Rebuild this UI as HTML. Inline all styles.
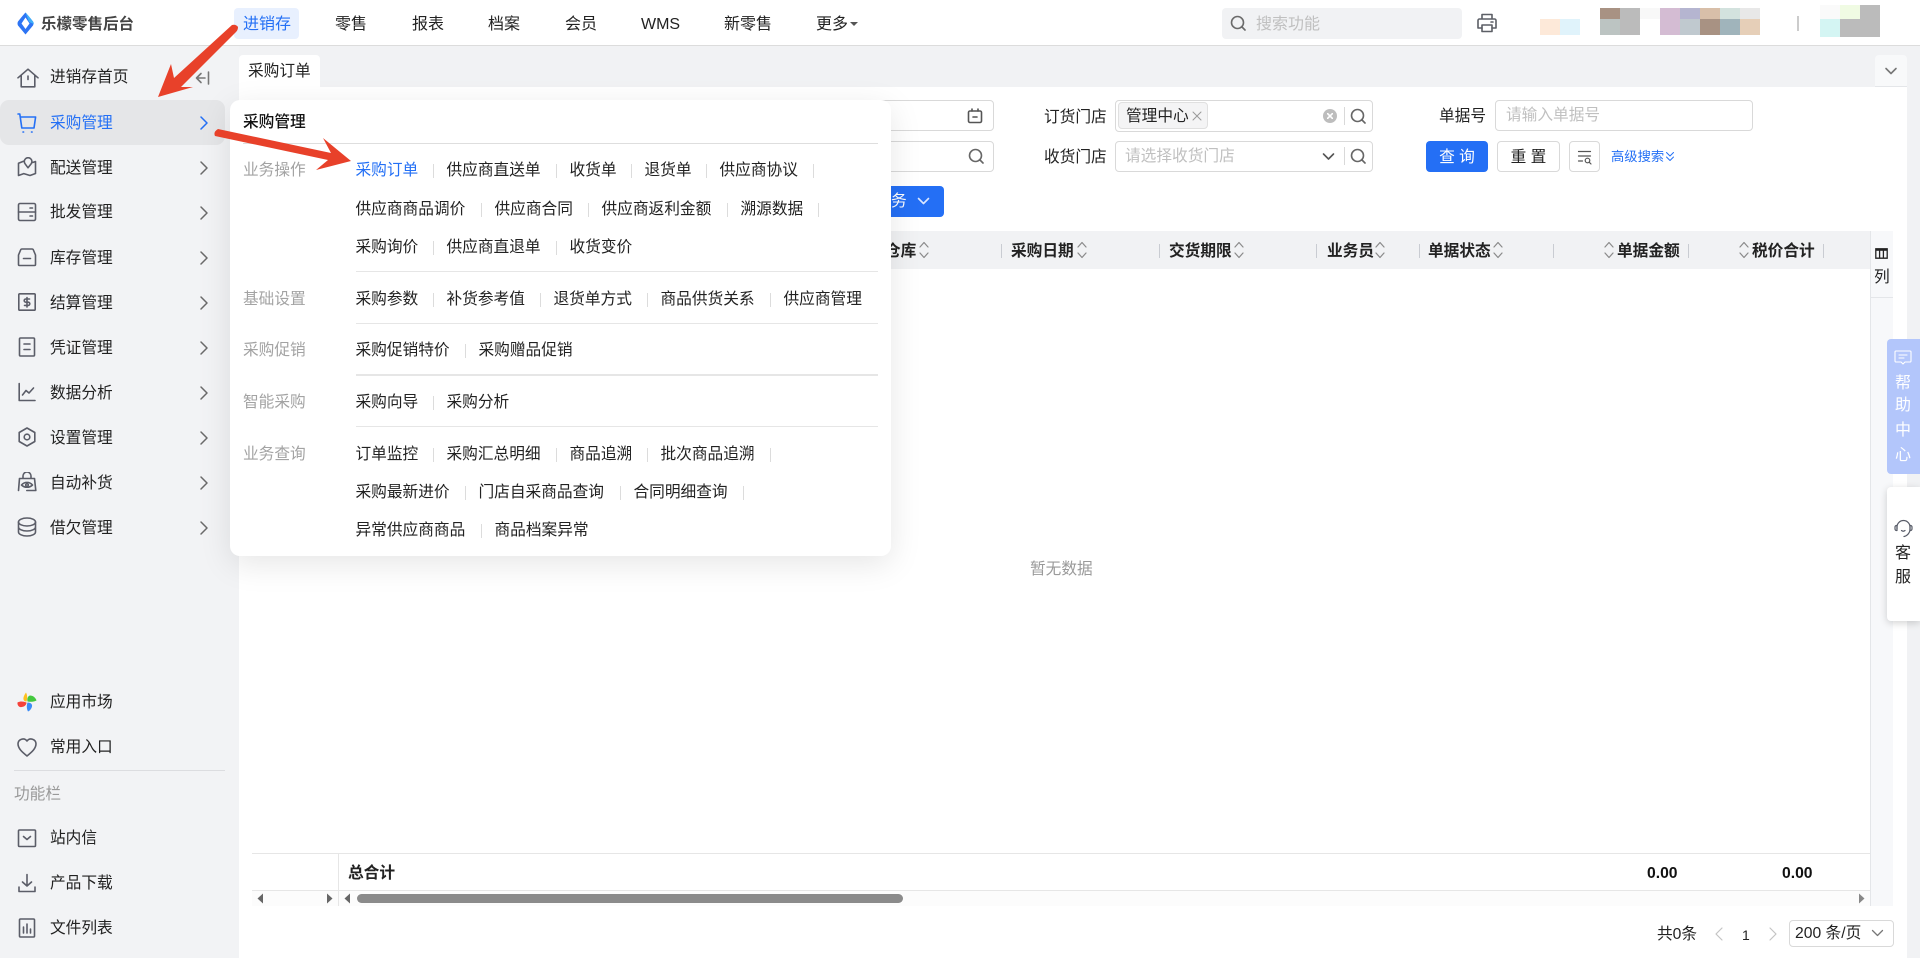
<!DOCTYPE html>
<html lang="zh-CN"><head><meta charset="utf-8"><title>采购订单</title>
<style>
html,body{margin:0;padding:0;width:1920px;height:958px;overflow:hidden;background:#fff}
body{font-family:"Liberation Sans","Noto Sans CJK SC",sans-serif;font-size:15.7px;color:#222;position:relative}
.a,.t,svg.i,.l,.it,.sep{position:absolute}
.t{white-space:nowrap;line-height:20px;height:20px;transform:translateY(2px)}
.n{font-size:16px}
.b{font-weight:700}
.g{color:#a3a3a3}.p{color:#c0c0c0}
.i{fill:none;stroke:#5b5d68;stroke-width:1.6;stroke-linecap:round;stroke-linejoin:round}
.it{white-space:nowrap;line-height:20px;display:flex;align-items:center;left:355.5px;transform:translateY(2px)}
.it i{display:block;width:1px;height:14px;background:#dcdcdc;margin:0 13px}
.it span{display:block}
.line{position:absolute;left:356px;width:522px;height:1px;background:#e6e6e6}
.box{position:absolute;border:1px solid #d9d9d9;border-radius:4px;box-sizing:border-box;background:#fff}
.ts{position:absolute;width:1px;height:14px;top:244px;background:#c9ccd2}
.chev{stroke:#6a6a6a;stroke-width:1.5}
</style></head><body>

<!-- main backgrounds -->
<div class="a" style="left:0;top:46px;width:239px;height:912px;background:#f2f3f5"></div>
<div class="a" style="left:239px;top:46px;width:1681px;height:41px;background:#f1f2f4"></div>
<div class="a" style="left:1907px;top:46px;width:13px;height:912px;background:#f1f2f4"></div>
<div class="a" style="left:239px;top:55px;width:81px;height:32px;background:#fff;border-radius:4px 4px 0 0"></div>
<div class="t" style="left:248px;top:60px">采购订单</div>
<div class="a" style="left:1875px;top:55px;width:32px;height:31px;background:#f8f9fa;border-bottom:1px solid #e4e6e9;border-radius:4px 4px 0 0"></div>
<svg class="i" style="left:1884px;top:64px;stroke:#777" width="14" height="14" viewBox="0 0 14 14"><path d="M2 4.500l5 5 5-5"/></svg>

<!-- header -->
<div class="a" style="left:0;top:0;width:1920px;height:45px;background:#fff;border-bottom:1px solid #dcdcdc"></div>
<svg class="a" style="left:17px;top:12px" width="17" height="23" viewBox="0 0 17 23"><path d="M8.500 .5Q10 2 16 9.500q1 2 0 4L8.500 22.500 1 13.500q-1-2 0-4Q7 2 8.500 .5z" fill="#2d74f4"/><path d="M8.500 .5Q10 2 16 9.500q1 1 .8 2.500L12 10z" fill="#3fb0f8"/><path d="M8.500 5.500L12.500 11.500 8.500 17 4.500 11.500z" fill="#fff"/></svg>
<div class="t b" style="left:41px;top:13px;font-size:15.500px;color:#444">乐檬零售后台</div>
<div class="a" style="left:234px;top:8px;width:65px;height:31px;background:#e8f0fe;border-radius:4px"></div>
<div class="t n" style="left:243px;top:13px;color:#2470f5">进销存</div>
<div class="t n" style="left:335px;top:13px">零售</div>
<div class="t n" style="left:412px;top:13px">报表</div>
<div class="t n" style="left:488px;top:13px">档案</div>
<div class="t n" style="left:565px;top:13px">会员</div>
<div class="t n" style="left:641px;top:13px">WMS</div>
<div class="t n" style="left:724px;top:13px">新零售</div>
<div class="t n" style="left:816px;top:13px">更多</div>
<div class="a" style="left:850px;top:22px;width:0;height:0;border:4px solid transparent;border-top:4px solid #555;border-bottom:0"></div>
<div class="a" style="left:1222px;top:8px;width:240px;height:31px;background:#f1f2f4;border-radius:4px"></div>
<svg class="i" style="left:1230px;top:15px;stroke:#6a6a6a" width="16" height="16" viewBox="0 0 16 16"><circle cx="7.500" cy="7.500" r="6"/><path d="M12 12l3 3"/></svg>
<div class="t p n" style="left:1256px;top:13px">搜索功能</div>
<svg class="i" style="left:1477px;top:13px;stroke:#5c5f66" width="20" height="20" viewBox="0 0 20 20"><path d="M5 6V1.500h10V6M5 15H1V7.500A1.500 1.500 0 0 1 2.500 6h15A1.500 1.500 0 0 1 19 7.500V15h-4"/><path d="M5 12h10v6.500H5zM14 9h2"/></svg>
<!-- mosaic blocks -->
<div class="a" style="left:1540px;top:19px;width:20px;height:16px;background:#fde9d9"></div>
<div class="a" style="left:1560px;top:19px;width:20px;height:16px;background:#e0f3fb"></div>
<div class="a" style="left:1600px;top:8px;width:20px;height:11px;background:#a89283"></div>
<div class="a" style="left:1600px;top:19px;width:20px;height:16px;background:#bcc4c2"></div>
<div class="a" style="left:1620px;top:8px;width:20px;height:27px;background:#bbb"></div>
<div class="a" style="left:1640px;top:8px;width:20px;height:11px;background:#f8f8f8"></div>
<div class="a" style="left:1660px;top:8px;width:20px;height:27px;background:#d4bcd3"></div>
<div class="a" style="left:1680px;top:8px;width:20px;height:11px;background:#b5b5d0"></div>
<div class="a" style="left:1680px;top:19px;width:20px;height:16px;background:#c0c9cf"></div>
<div class="a" style="left:1700px;top:8px;width:20px;height:11px;background:#d8bfa9"></div>
<div class="a" style="left:1700px;top:19px;width:20px;height:16px;background:#a89283"></div>
<div class="a" style="left:1720px;top:8px;width:20px;height:11px;background:#d3e2de"></div>
<div class="a" style="left:1720px;top:19px;width:20px;height:16px;background:#a0b4bb"></div>
<div class="a" style="left:1740px;top:8px;width:20px;height:11px;background:#e8e8e8"></div>
<div class="a" style="left:1740px;top:19px;width:20px;height:16px;background:#e6cfb8"></div>
<div class="a" style="left:1797px;top:16px;width:2px;height:15px;background:#ccc"></div>
<div class="a" style="left:1820px;top:5px;width:20px;height:14px;background:#fafafa"></div>
<div class="a" style="left:1820px;top:19px;width:20px;height:18px;background:#d4f5f3"></div>
<div class="a" style="left:1840px;top:5px;width:20px;height:14px;background:#f0fbe3"></div>
<div class="a" style="left:1840px;top:19px;width:20px;height:18px;background:#bbb"></div>
<div class="a" style="left:1860px;top:5px;width:20px;height:32px;background:#bbb"></div>

<!-- sidebar -->
<div class="a" style="left:0;top:100px;width:225px;height:45px;background:#e5e6e8;border-radius:9px"></div>
<svg class="i" style="left:17px;top:68px" width="22" height="20" viewBox="0 0 22 20"><path d="M1 9.800L11 1.200l10 8.600M4.200 7.500V18.800H17.800V7.500M11 8v3.500"/></svg>
<div class="t" style="left:50px;top:66px">进销存首页</div>
<svg class="i" style="left:195px;top:71px;stroke:#777" width="16" height="14" viewBox="0 0 16 14"><path d="M13.500 1v12M10 7H1.500M6 2.500L1.500 7 6 11.500"/></svg>

<svg class="i" style="left:17px;top:113px;stroke:#2470f5" width="20" height="20" viewBox="0 0 20 20"><path d="M1 1h1.800L4.800 15H17l1.600-11H3.300"/><path d="M6 19h.6M14.500 19h.6"/></svg>
<div class="t" style="left:50px;top:112px;color:#2470f5">采购管理</div>

<svg class="i" style="left:17px;top:157px" width="20" height="20" viewBox="0 0 20 20"><path d="M6.500 4.200L1.500 6.300v12.200l5.300-1.900 6.200 1.900 5.500-2V4.500L15.700 5.500"/><path d="M11 10.800L8 6.700a3.800 3.800 0 1 1 6.200 0z"/></svg>
<div class="t" style="left:50px;top:157px">配送管理</div>

<svg class="i" style="left:17px;top:202px" width="20" height="20" viewBox="0 0 20 20"><rect x="1.500" y="1.500" width="17" height="17" rx="1.500"/><path d="M1.500 10h17M13 6h2.500M13 14h2.500"/></svg>
<div class="t" style="left:50px;top:201px">批发管理</div>

<svg class="i" style="left:17px;top:247px" width="20" height="20" viewBox="0 0 20 20"><path d="M5 2h10a1.500 1.500 0 0 1 1.400 1L18.500 8v9.500a1 1 0 0 1-1 1h-15a1 1 0 0 1-1-1V8L3.600 3A1.500 1.500 0 0 1 5 2z"/><path d="M6.500 11.500h7"/></svg>
<div class="t" style="left:50px;top:247px">库存管理</div>

<svg class="i" style="left:17px;top:292px" width="20" height="20" viewBox="0 0 20 20"><rect x="1.800" y="1.800" width="16.400" height="16.400" rx="1"/><path d="M12.500 7H8.800a1.500 1.500 0 0 0 0 3.200h2.400a1.500 1.500 0 0 1 0 3.200H7.500M10 5.500v9.500"/></svg>
<div class="t" style="left:50px;top:292px">结算管理</div>

<svg class="i" style="left:17px;top:337px" width="20" height="20" viewBox="0 0 20 20"><rect x="2.500" y="1" width="15" height="18" rx="1"/><path d="M7 7h6M7 12.500h6"/></svg>
<div class="t" style="left:50px;top:337px">凭证管理</div>

<svg class="i" style="left:17px;top:382px" width="20" height="20" viewBox="0 0 20 20"><path d="M2.200 1.500V18.500H18M5.500 13l3.500-4.500 3 2.500 4.500-5"/></svg>
<div class="t" style="left:50px;top:382px">数据分析</div>

<svg class="i" style="left:17px;top:427px" width="20" height="20" viewBox="0 0 20 20"><path d="M10 1l7.800 4.500v9L10 19l-7.800-4.500v-9z"/><circle cx="10" cy="10" r="2.800"/></svg>
<div class="t" style="left:50px;top:427px">设置管理</div>

<svg class="i" style="left:17px;top:472px" width="20" height="20" viewBox="0 0 20 20"><path d="M6 6.500V4a4 4 0 0 1 8 0v2.500M2.500 6.500h15l1.300 12h-9M2.500 6.500L1.500 18.500M4.500 13c3-3.500 8-3.500 11 0-3 3-8 3-11 0z"/><circle cx="10" cy="13" r="1.300"/></svg>
<div class="t" style="left:50px;top:472px">自动补货</div>

<svg class="i" style="left:17px;top:517px" width="20" height="20" viewBox="0 0 20 20"><ellipse cx="10" cy="5" rx="8.500" ry="4"/><path d="M1.500 5v10c0 2.200 3.800 4 8.500 4s8.500-1.800 8.500-4V5M1.500 10c0 2.200 3.800 4 8.500 4s8.500-1.800 8.500-4"/></svg>
<div class="t" style="left:50px;top:517px">借欠管理</div>

<!-- chevrons -->
<svg class="i chev" style="left:199px;top:114px;stroke:#2470f5" width="10" height="18" viewBox="0 0 10 18"><path d="M2 3l6 6-6 6"/></svg>
<svg class="i chev" style="left:199px;top:159px" width="10" height="18" viewBox="0 0 10 18"><path d="M2 3l6 6-6 6"/></svg>
<svg class="i chev" style="left:199px;top:204px" width="10" height="18" viewBox="0 0 10 18"><path d="M2 3l6 6-6 6"/></svg>
<svg class="i chev" style="left:199px;top:249px" width="10" height="18" viewBox="0 0 10 18"><path d="M2 3l6 6-6 6"/></svg>
<svg class="i chev" style="left:199px;top:294px" width="10" height="18" viewBox="0 0 10 18"><path d="M2 3l6 6-6 6"/></svg>
<svg class="i chev" style="left:199px;top:339px" width="10" height="18" viewBox="0 0 10 18"><path d="M2 3l6 6-6 6"/></svg>
<svg class="i chev" style="left:199px;top:384px" width="10" height="18" viewBox="0 0 10 18"><path d="M2 3l6 6-6 6"/></svg>
<svg class="i chev" style="left:199px;top:429px" width="10" height="18" viewBox="0 0 10 18"><path d="M2 3l6 6-6 6"/></svg>
<svg class="i chev" style="left:199px;top:474px" width="10" height="18" viewBox="0 0 10 18"><path d="M2 3l6 6-6 6"/></svg>
<svg class="i chev" style="left:199px;top:519px" width="10" height="18" viewBox="0 0 10 18"><path d="M2 3l6 6-6 6"/></svg>

<!-- sidebar bottom -->
<svg class="a" style="left:17px;top:692px" width="20" height="20" viewBox="0 0 20 20"><path d="M9.500 9.500C6 9.500 5 6 9 .5c1.500 3 1.500 6 .5 9z" fill="#fdc01e"/><path d="M10.500 9.500c-1-4 1.500-6 2.500-6 3 0 5.500 2 6.500 5-3 1.500-6 1.500-9 1z" fill="#44c83f"/><path d="M9.500 10.500c0 3.500-4 5-6.500 4.500-2-.5-2.800-3-2.500-4.500 3-1.500 6-1 9 0z" fill="#f5423b"/><path d="M10.500 10.500c3.500 0 5 2 4.500 4-.5 2.500-2.500 4.500-4 5-1.500-3-1.500-6-.5-9z" fill="#3b8cf7"/></svg>
<div class="t" style="left:50px;top:691px">应用市场</div>
<svg class="i" style="left:17px;top:737px" width="20" height="20" viewBox="0 0 20 20"><path d="M10 19C5 15 1 11.500 1 6.800A5 5 0 0 1 10 4a5 5 0 0 1 9 2.800c0 4.700-4 8.200-9 12.200z"/></svg>
<div class="t" style="left:50px;top:736px">常用入口</div>
<div class="a" style="left:14px;top:770px;width:211px;height:1px;background:#dcdde0"></div>
<div class="t g" style="left:14px;top:783px;color:#999">功能栏</div>
<svg class="i" style="left:17px;top:828px" width="20" height="20" viewBox="0 0 20 20"><rect x="1.500" y="2" width="17" height="16.500" rx="1"/><path d="M6.500 8.500L10 11.500l3.500-3"/></svg>
<div class="t" style="left:50px;top:827px">站内信</div>
<svg class="i" style="left:17px;top:873px" width="20" height="20" viewBox="0 0 20 20"><path d="M10 1.500v11.500M5.500 9l4.500 4 4.500-4M2 14v4.500h16V14"/></svg>
<div class="t" style="left:50px;top:872px">产品下载</div>
<svg class="i" style="left:17px;top:918px" width="20" height="20" viewBox="0 0 20 20"><rect x="2.500" y="1" width="15" height="18" rx="1"/><path d="M6.500 9v6M10 6v9M13.500 11v4"/></svg>
<div class="t" style="left:50px;top:917px">文件列表</div>

<!-- form -->
<div class="box" style="left:850px;top:100px;width:144px;height:31px"></div>
<svg class="i" style="left:967px;top:108px;stroke:#555" width="16" height="16" viewBox="0 0 16 16"><rect x="1.500" y="3" width="13" height="11.500" rx="1.500"/><path d="M5 1v2M11 1v2M6 9h4"/></svg>
<div class="box" style="left:850px;top:141px;width:144px;height:31px"></div>
<svg class="i" style="left:968px;top:148px;stroke:#666" width="16" height="16" viewBox="0 0 16 16"><circle cx="7.500" cy="7.500" r="6"/><path d="M12 12l3 3"/></svg>
<div class="t" style="left:1044px;top:106px">订货门店</div>
<div class="t" style="left:1044px;top:146px">收货门店</div>
<div class="box" style="left:1115px;top:100px;width:258px;height:32px"></div>
<div class="box" style="left:1118px;top:102px;width:90px;height:27px;background:#f4f4f5;border-color:#e0e0e0"></div>
<div class="t" style="left:1126px;top:105px">管理中心</div>
<svg class="i" style="left:1192px;top:111px;stroke:#999;stroke-width:1" width="10" height="10" viewBox="0 0 10 10"><path d="M1 1l8 8M9 1L1 9"/></svg>
<div class="a" style="left:1323px;top:109px;width:14px;height:14px;border-radius:50%;background:#bdbdbd"></div>
<svg class="i" style="left:1327px;top:113px;stroke:#fff" width="6" height="6" viewBox="0 0 6 6"><path d="M.5.500l5 5M5.500.500l-5 5"/></svg>
<div class="a" style="left:1344px;top:107px;width:1px;height:18px;background:#d9d9d9"></div>
<svg class="i" style="left:1350px;top:108px;stroke:#666" width="16" height="16" viewBox="0 0 16 16"><circle cx="7.500" cy="7.500" r="6"/><path d="M12 12l3 3"/></svg>
<div class="box" style="left:1115px;top:141px;width:258px;height:31px"></div>
<div class="t p" style="left:1125px;top:145px">请选择收货门店</div>
<svg class="i" style="left:1322px;top:150px;stroke:#555" width="13" height="13" viewBox="0 0 13 13"><path d="M1.500 4l5 5 5-5"/></svg>
<div class="a" style="left:1344px;top:147px;width:1px;height:18px;background:#d9d9d9"></div>
<svg class="i" style="left:1350px;top:148px;stroke:#666" width="16" height="16" viewBox="0 0 16 16"><circle cx="7.500" cy="7.500" r="6"/><path d="M12 12l3 3"/></svg>
<div class="t" style="left:1439px;top:105px">单据号</div>
<div class="box" style="left:1495px;top:100px;width:258px;height:31px"></div>
<div class="t p" style="left:1506px;top:104px">请输入单据号</div>
<div class="a" style="left:1426px;top:141px;width:62px;height:31px;background:#246ff5;border-radius:4px"></div>
<div class="t" style="left:1426px;top:146px;width:62px;text-align:center;color:#fff">查 询</div>
<div class="box" style="left:1497px;top:141px;width:63px;height:31px"></div>
<div class="t" style="left:1497px;top:146px;width:63px;text-align:center">重 置</div>
<div class="box" style="left:1569px;top:141px;width:31px;height:31px"></div>
<svg class="i" style="left:1577px;top:149px;stroke:#555;stroke-width:1.200" width="16" height="16" viewBox="0 0 16 16"><path d="M1.500 2.500h12M1.500 7h12M1.500 12h4"/><circle cx="10.500" cy="11.500" r="2.300"/><path d="M12.200 13.200l1.800 1.800"/></svg>
<div class="t" style="left:1611px;top:145px;font-size:13.300px;color:#2470f5">高级搜索</div>
<svg class="i" style="left:1665px;top:151px;stroke:#2470f5;stroke-width:1" width="10" height="11" viewBox="0 0 10 11"><path d="M1.500 1.500L5 5l3.500-3.500M1.500 6L5 9.500 8.500 6"/></svg>

<!-- blue button -->
<div class="a" style="left:860px;top:186px;width:84px;height:31px;background:#246ff5;border-radius:4px"></div>
<div class="t" style="left:891px;top:190px;color:#fff">务</div>
<svg class="i" style="left:917px;top:196px;stroke:#dbe7ff" width="13" height="11" viewBox="0 0 13 11"><path d="M1.500 2.500l5 5 5-5"/></svg>

<!-- table header -->
<div class="a" style="left:252px;top:231px;width:1619px;height:38px;background:#f1f2f4"></div>
<div class="ts" style="left:1001px"></div><div class="ts" style="left:1159px"></div><div class="ts" style="left:1316px"></div><div class="ts" style="left:1419px"></div><div class="ts" style="left:1553px"></div><div class="ts" style="left:1688px"></div><div class="ts" style="left:1823px"></div>
<div class="t b" style="left:885px;top:240px">仓库</div>
<div class="t b" style="left:1011px;top:240px">采购日期</div>
<div class="t b" style="left:1169px;top:240px">交货期限</div>
<div class="t b" style="left:1327px;top:240px">业务员</div>
<div class="t b" style="left:1428px;top:240px">单据状态</div>
<div class="t b" style="left:1617px;top:240px">单据金额</div>
<div class="t b" style="left:1752px;top:240px">税价合计</div>
<svg class="i" style="left:919px;top:241px;stroke:#8a8a8a;stroke-width:1.200" width="10" height="18" viewBox="0 0 10 18"><path d="M1 6l4-4.500L9 6M1 12l4 4.500L9 12"/></svg>
<svg class="i" style="left:1077px;top:241px;stroke:#8a8a8a;stroke-width:1.200" width="10" height="18" viewBox="0 0 10 18"><path d="M1 6l4-4.500L9 6M1 12l4 4.500L9 12"/></svg>
<svg class="i" style="left:1234px;top:241px;stroke:#8a8a8a;stroke-width:1.200" width="10" height="18" viewBox="0 0 10 18"><path d="M1 6l4-4.500L9 6M1 12l4 4.500L9 12"/></svg>
<svg class="i" style="left:1375px;top:241px;stroke:#8a8a8a;stroke-width:1.200" width="10" height="18" viewBox="0 0 10 18"><path d="M1 6l4-4.500L9 6M1 12l4 4.500L9 12"/></svg>
<svg class="i" style="left:1493px;top:241px;stroke:#8a8a8a;stroke-width:1.200" width="10" height="18" viewBox="0 0 10 18"><path d="M1 6l4-4.500L9 6M1 12l4 4.500L9 12"/></svg>
<svg class="i" style="left:1604px;top:241px;stroke:#8a8a8a;stroke-width:1.200" width="10" height="18" viewBox="0 0 10 18"><path d="M1 6l4-4.500L9 6M1 12l4 4.500L9 12"/></svg>
<svg class="i" style="left:1739px;top:241px;stroke:#8a8a8a;stroke-width:1.200" width="10" height="18" viewBox="0 0 10 18"><path d="M1 6l4-4.500L9 6M1 12l4 4.500L9 12"/></svg>

<!-- right column strip -->
<div class="a" style="left:1870px;top:231px;width:23px;height:675px;background:#f7f8fa;border-left:1px solid #e4e6e9;box-sizing:border-box"></div>
<div class="a" style="left:1871px;top:297px;width:22px;height:1px;background:#e4e6e9"></div>
<svg class="a" style="left:1875px;top:248px" width="13" height="11" viewBox="0 0 13 11"><path d="M.8.800h11.400v9.400H.8zM4.600.800v9.400M8.400.800v9.400" fill="none" stroke="#222" stroke-width="1.300"/><path d="M.8.800h11.400v2H.8z" fill="#222"/></svg>
<div class="t" style="left:1874px;top:266px">列</div>

<div class="t" style="left:1030px;top:558px;color:#9a9a9a">暂无数据</div>

<!-- summary -->
<div class="a" style="left:252px;top:853px;width:1618px;height:1px;background:#e6e6e6"></div>
<div class="a" style="left:252px;top:890px;width:1618px;height:1px;background:#e6e6e6"></div>
<div class="a" style="left:338px;top:853px;width:1px;height:53px;background:#e6e6e6"></div>
<div class="a" style="left:252px;top:891px;width:1618px;height:15px;background:#fcfcfc"></div>
<div class="t b" style="left:348px;top:862px">总合计</div>
<div class="t b" style="left:1647px;top:862px;color:#111">0.00</div>
<div class="t b" style="left:1782px;top:862px;color:#111">0.00</div>
<div class="a" style="left:338px;top:891px;width:1px;height:15px;background:#e6e6e6"></div>
<div class="a" style="left:357px;top:894px;width:546px;height:9px;background:#8b8b8b;border-radius:5px"></div>
<svg class="a" style="left:256px;top:893px" width="8" height="11" viewBox="0 0 8 11"><path d="M7 .5L1.500 5.500 7 10.500z" fill="#666"/></svg>
<svg class="a" style="left:326px;top:893px" width="8" height="11" viewBox="0 0 8 11"><path d="M1 .5L6.500 5.500 1 10.500z" fill="#666"/></svg>
<svg class="a" style="left:343px;top:893px" width="8" height="11" viewBox="0 0 8 11"><path d="M7 .5L1.500 5.500 7 10.500z" fill="#666"/></svg>
<svg class="a" style="left:1858px;top:893px" width="8" height="11" viewBox="0 0 8 11"><path d="M1 .5L6.500 5.500 1 10.500z" fill="#888"/></svg>

<!-- pagination -->
<div class="t" style="left:1657px;top:923px">共0条</div>
<svg class="i" style="left:1714px;top:927px;stroke:#c4c4c4;stroke-width:1.200" width="10" height="14" viewBox="0 0 10 14"><path d="M8 1L2 7l6 6"/></svg>
<div class="t" style="left:1742px;top:923px;font-size:14px">1</div>
<svg class="i" style="left:1768px;top:927px;stroke:#c4c4c4;stroke-width:1.200" width="10" height="14" viewBox="0 0 10 14"><path d="M2 1l6 6-6 6"/></svg>
<div class="box" style="left:1789px;top:920px;width:105px;height:27px"></div>
<div class="t" style="left:1795px;top:922px">200 条/页</div>
<svg class="i" style="left:1871px;top:928px;stroke:#777;stroke-width:1.300" width="13" height="11" viewBox="0 0 13 11"><path d="M1.500 2.500l5 5 5-5"/></svg>

<!-- side floating -->
<div class="a" style="left:1887px;top:339px;width:33px;height:135px;background:#b3c6fb;border-radius:4px 0 0 4px"></div>
<svg class="i" style="left:1894px;top:350px;stroke:#fff;stroke-width:1.100" width="18" height="15" viewBox="0 0 18 15"><path d="M2 1h14a1 1 0 0 1 1 1v9a1 1 0 0 1-1 1h-5l-2 2-2-2H2a1 1 0 0 1-1-1V2a1 1 0 0 1 1-1zM5 5h8M5 8h5"/></svg>
<div class="t n" style="left:1895px;top:372px;color:#fff">帮</div>
<div class="t n" style="left:1895px;top:394px;color:#fff">助</div>
<div class="t n" style="left:1895px;top:419px;color:#fff">中</div>
<div class="t n" style="left:1895px;top:444px;color:#fff">心</div>
<div class="a" style="left:1887px;top:487px;width:33px;height:134px;background:#fff;border-radius:4px 0 0 4px;box-shadow:0 2px 8px rgba(0,0,0,.18)"></div>
<svg class="i" style="left:1894px;top:519px;stroke:#585c68;stroke-width:1.200" width="19" height="19" viewBox="0 0 19 19"><path d="M3 10V8a6.500 6.500 0 0 1 13 0v2c0 4-3 7-6 7.500"/><path d="M3 6.500h-.5A1.500 1.500 0 0 0 1 8v2a1.500 1.500 0 0 0 1.500 1.500H3zM16 6.500h.5A1.500 1.500 0 0 1 18 8v2a1.500 1.500 0 0 1-1.500 1.500H16zM7.500 11.500c1 .8 2.500.8 3.500 0"/></svg>
<div class="t n" style="left:1895px;top:542px">客</div>
<div class="t n" style="left:1895px;top:566px">服</div>

<!-- popup -->
<div class="a" style="left:230px;top:100px;width:661px;height:456px;background:#fff;border-radius:10px;box-shadow:0 8px 32px rgba(0,0,0,.1)"></div>
<div class="t" style="left:243px;top:111px;color:#111;font-weight:500">采购管理</div>
<div class="a" style="left:243px;top:143px;width:635px;height:1px;background:#dedede"></div>

<div class="t g" style="left:243px;top:159px">业务操作</div>
<div class="it" style="top:159px"><span style="color:#2470f5;width:64px">采购订单</span><i></i><span style="width:96px">供应商直送单</span><i></i><span style="width:48px">收货单</span><i></i><span style="width:48px">退货单</span><i></i><span style="width:80px">供应商协议</span><i></i></div>
<div class="it" style="top:198px"><span style="width:112px">供应商商品调价</span><i></i><span style="width:80px">供应商合同</span><i></i><span style="width:112px">供应商返利金额</span><i></i><span style="width:64px">溯源数据</span><i></i></div>
<div class="it" style="top:236px"><span style="width:64px">采购询价</span><i></i><span style="width:96px">供应商直退单</span><i></i><span style="width:64px">收货变价</span></div>
<div class="line" style="top:271px"></div>

<div class="t g" style="left:243px;top:288px">基础设置</div>
<div class="it" style="top:288px"><span style="width:64px">采购参数</span><i></i><span style="width:80px">补货参考值</span><i></i><span style="width:80px">退货单方式</span><i></i><span style="width:96px">商品供货关系</span><i></i><span style="width:80px">供应商管理</span></div>
<div class="line" style="top:323px"></div>

<div class="t g" style="left:243px;top:339px">采购促销</div>
<div class="it" style="top:339px"><span style="width:96px">采购促销特价</span><i></i><span style="width:96px">采购赠品促销</span></div>
<div class="line" style="top:374px;height:2px"></div>

<div class="t g" style="left:243px;top:391px">智能采购</div>
<div class="it" style="top:391px"><span style="width:64px">采购向导</span><i></i><span style="width:64px">采购分析</span></div>
<div class="line" style="top:426px"></div>

<div class="t g" style="left:243px;top:443px">业务查询</div>
<div class="it" style="top:443px"><span style="width:64px">订单监控</span><i></i><span style="width:96px">采购汇总明细</span><i></i><span style="width:64px">商品追溯</span><i></i><span style="width:96px">批次商品追溯</span><i></i></div>
<div class="it" style="top:481px"><span style="width:96px">采购最新进价</span><i></i><span style="width:128px">门店自采商品查询</span><i></i><span style="width:96px">合同明细查询</span><i></i></div>
<div class="it" style="top:519px"><span style="width:112px">异常供应商商品</span><i></i><span style="width:96px">商品档案异常</span></div>

<!-- red arrows -->
<svg class="a" style="left:0;top:0" width="1920" height="958" viewBox="0 0 1920 958">
<path d="M232 25Q236 24 238 27 Q238 30 236 32L181 87 193 87 158 97 171 64 174 78z" fill="#e8412a"/>
<path d="M218 129L331 153 323 138 351 161 316 170 328 160 215 136Q213 132 218 129z" fill="#e8412a"/>
</svg>
</body></html>
